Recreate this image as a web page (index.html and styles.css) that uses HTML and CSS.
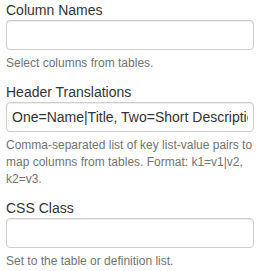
FILE: index.html
```html
<!DOCTYPE html>
<html>
<head>
<meta charset="utf-8">
<link rel="stylesheet" href="styles.css">
</head>
<body>
<div class="form">
  <div class="form-group">
    <label class="field-label">Column Names</label>
    <input class="field-input" type="text" value="">
    <p class="help">Select columns from tables.</p>
  </div>
  <div class="form-group">
    <label class="field-label">Header Translations</label>
    <input class="field-input" type="text" value="One=Name|Title, Two=Short Description">
    <p class="help">Comma-separated list of key list-value pairs to map columns from tables. Format: k1=v1|v2, k2=v3.</p>
  </div>
  <div class="form-group">
    <label class="field-label">CSS Class</label>
    <input class="field-input" type="text" value="">
    <p class="help">Set to the table or definition list.</p>
  </div>
</div>
</body>
</html>
```

FILE: styles.css
```css
html, body {
  margin: 0;
  padding: 0;
  background: #fff;
}
body {
  font-family: "Liberation Sans", Arial, sans-serif;
  font-size: 14px;
  line-height: 1.42857;
  color: #333;
}
.form {
  width: 248px;
  padding-left: 6px;
}
.form-group {
  display: flex;
  flex-direction: column;
}
.field-label {
  display: block;
  font-weight: normal;
  height: 20px;
  line-height: 20px;
}
.field-input {
  box-sizing: border-box;
  width: 248px;
  height: 30px;
  margin: 0;
  padding: 4px 5px;
  font-family: "Liberation Sans", Arial, sans-serif;
  font-size: 14px;
  color: #333;
  border: 1px solid #ccc;
  border-radius: 4px;
  box-shadow: inset 0 1px 1px rgba(0,0,0,.075);
  outline: none;
  background: #fff;
}
.help {
  margin: 5px 0 10px;
  font-size: 12px;
  line-height: 17px;
  color: #737373;
}
```
